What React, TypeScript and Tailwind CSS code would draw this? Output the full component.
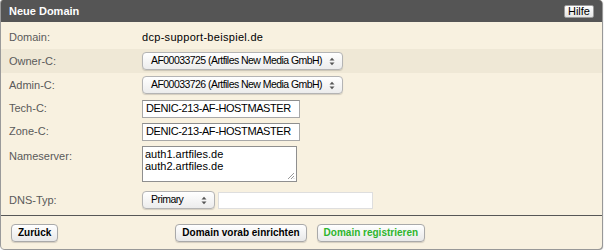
import React from 'react';

const font = { fontFamily: '"Liberation Sans", Arial, sans-serif' };

function Updown() {
    return (
        <svg width="6" height="9" viewBox="0 0 6 9" className="shrink-0">
            <path d="M0.5 3.5 L3 0.8 L5.5 3.5 Z" fill="#555" />
            <path d="M0.5 5.5 L3 8.2 L5.5 5.5 Z" fill="#555" />
        </svg>
    );
}

function FakeSelect({ value, width }: { value: string; width: string }) {
    return (
        <div
            className={`${width} h-[18px] flex items-center justify-between pl-[8px] pr-[7px] rounded-[4px] border border-[#b4b4b4] bg-gradient-to-b from-white to-[#ececec] shadow-[0_1px_1px_rgba(0,0,0,0.15)] text-[10.5px] text-black whitespace-nowrap`}
        >
            <span className="tracking-[-0.55px]">{value}</span>
            <Updown />
        </div>
    );
}

function TextBox({ value, width }: { value: string; width: string }) {
    return (
        <div className={`${width} h-[18px] flex items-center px-[3px] bg-white border border-[#a8a8a8] border-t-[#8e8e8e] text-[11px] tracking-[-0.4px] text-black whitespace-nowrap overflow-hidden`}>
            {value}
        </div>
    );
}

function Row({ label, children, className = 'h-[24px]', top = false }: { label: string; children: React.ReactNode; className?: string; top?: boolean }) {
    return (
        <div className={`flex ${top ? 'items-start pt-[5px]' : 'items-center'} pl-[8px] ${className}`}>
            <div className="w-[133px] text-[11px] text-[#5a5a5a]">{label}</div>
            <div className="flex items-center gap-[3px]">{children}</div>
        </div>
    );
}

function MacButton({ children, green = false }: { children: React.ReactNode; green?: boolean }) {
    return (
        <button
            className={`h-[18px] px-[6px] rounded-[4px] border border-[#a9a9a9] bg-gradient-to-b from-white to-[#e8e8e8] shadow-[0_1px_1px_rgba(0,0,0,0.15)] text-[10px] font-bold leading-none whitespace-nowrap ${green ? 'text-[#2db52d]' : 'text-black'}`}
        >
            {children}
        </button>
    );
}

export default function App() {
    return (
        <div className="w-[604px] h-[250px] bg-white" style={font}>
            <div className="w-[602px] h-[249px] flex flex-col bg-[#f8f1e0] border-l border-[#9a9a9a] rounded-t-[3px] rounded-b-[4px] shadow-[1px_1px_1px_rgba(0,0,0,0.45)] overflow-hidden">
                {/* Header */}
                <div className="h-[22px] shrink-0 flex items-center justify-between pl-[8px] pr-[8px] bg-[#555555]">
                    <span className="text-[11px] font-bold text-white">Neue Domain</span>
                    <span className="h-[13px] px-[3px] flex items-center bg-gradient-to-b from-white to-[#e4e4e4] border border-[#9a9a9a] rounded-[2px] text-[11px] text-black leading-none">
                        Hilfe
                    </span>
                </div>

                {/* Fields */}
                <div className="flex flex-col pt-[4px]">
                    <Row label="Domain:" className="h-[23px]">
                        <span className="text-[11px] text-black tracking-[0.3px]">dcp-support-beispiel.de</span>
                    </Row>
                    <Row label="Owner-C:" className="h-[24px] bg-[#efe8d6]">
                        <FakeSelect value="AF00033725 (Artfiles New Media GmbH)" width="w-[201px]" />
                    </Row>
                    <Row label="Admin-C:">
                        <FakeSelect value="AF00033726 (Artfiles New Media GmbH)" width="w-[201px]" />
                    </Row>
                    <Row label="Tech-C:" className="h-[23px]">
                        <TextBox value="DENIC-213-AF-HOSTMASTER" width="w-[158px]" />
                    </Row>
                    <Row label="Zone-C:" className="h-[23px]">
                        <TextBox value="DENIC-213-AF-HOSTMASTER" width="w-[158px]" />
                    </Row>
                    <Row label="Nameserver:" className="h-[44px]" top>
                        <div className="relative w-[155px] h-[36px] -mt-[2px] bg-white border border-[#8f8f8f] px-[2px] pt-[1px] text-[11px] leading-[12px] text-black">
                            <div>auth1.artfiles.de</div>
                            <div>auth2.artfiles.de</div>
                            <svg width="8" height="8" viewBox="0 0 8 8" className="absolute right-[1px] bottom-[1px]">
                                <path d="M7 1 L1 7 M7 4 L4 7 M7 6.5 L6.5 7" stroke="#9a9a9a" strokeWidth="1" />
                            </svg>
                        </div>
                    </Row>
                    <Row label="DNS-Typ:" className="h-[26px]">
                        <FakeSelect value="Primary" width="w-[73px]" />
                        <div className="w-[155px] h-[17px] bg-white border border-[#dedede]" />
                    </Row>
                </div>

                {/* Footer */}
                <div className="mt-[2px] border-t border-[#575757] flex items-center h-[34px] pl-[10px] pt-[1px]">
                    <MacButton>Zurück</MacButton>
                    <div className="ml-[117px] flex gap-[10px]">
                        <MacButton>Domain vorab einrichten</MacButton>
                        <MacButton green>Domain registrieren</MacButton>
                    </div>
                </div>
            </div>
        </div>
    );
}
